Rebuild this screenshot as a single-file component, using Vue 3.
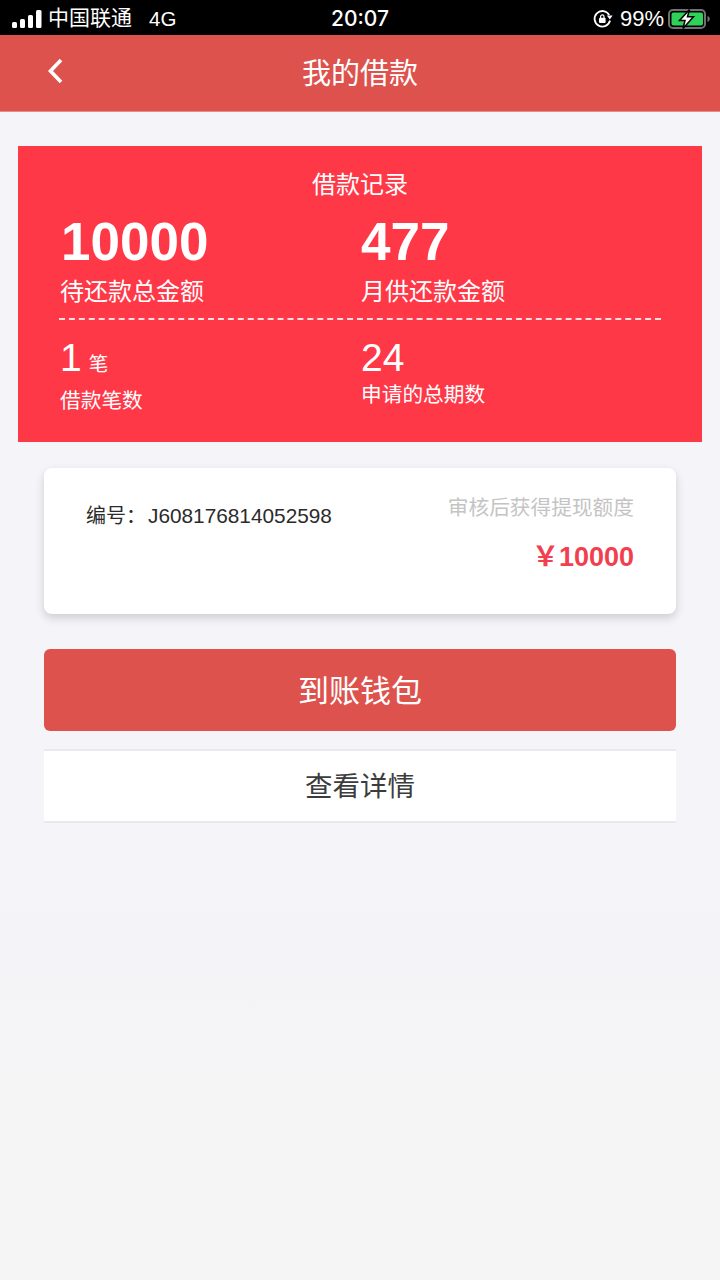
<template>
  <div class="page">
    <div class="status-bar">
      <div class="status-left">
        <svg class="signal" width="31" height="18" viewBox="0 0 31 18">
          <rect x="0" y="12" width="5" height="6" rx="1.5" fill="#fff" />
          <rect x="8" y="9" width="5" height="9" rx="1.5" fill="#fff" />
          <rect x="16" y="5" width="5" height="13" rx="1.5" fill="#fff" />
          <rect x="24" y="0" width="5.5" height="18" rx="1.5" fill="#fff" />
        </svg>
        <span class="carrier">中国联通</span>
        <span class="net">4G</span>
      </div>
      <div class="status-time">20:07</div>
      <div class="status-right">
        <svg width="20" height="20" viewBox="0 0 20 20" fill="none">
          <path d="M16.200 6A7.800 7.800 0 1 0 17 11.500" stroke="#fff" stroke-width="1.800" />
          <path d="M13.800 6.400h5.800L16.800 10.600z" fill="#fff" />
          <rect x="6" y="8.800" width="6.600" height="5.200" rx="1" fill="#fff" />
          <path d="M7.600 9V7.600a1.700 1.700 0 0 1 3.400 0V9" stroke="#fff" stroke-width="1.200" />
        </svg>
        <span class="percent">99%</span>
        <svg class="battery" width="43" height="20" viewBox="0 0 43 20" fill="none">
          <rect x="1" y="1" width="36" height="18" rx="4" stroke="#6f7173" stroke-width="2" />
          <rect x="3.500" y="3.500" width="31.500" height="13" rx="2" fill="#30d158" />
          <path d="M39.500 7v6c1.500-.4 2.300-1.600 2.300-3s-.8-2.600-2.300-3z" fill="#6f7173" />
          <path d="M21.500 0.500 11.500 11.500h5.500L15 19.500 25.500 7.800h-6z" fill="#fff" stroke="#000" stroke-width="1.500" />
        </svg>
      </div>
    </div>

    <header class="nav">
      <svg class="back" width="18" height="28" viewBox="0 0 18 28" fill="none">
        <path d="M15 3 4.500 14 15 25" stroke="#fff" stroke-width="3.600" />
      </svg>
      <h1 class="nav-title">我的借款</h1>
    </header>

    <section class="summary">
      <div class="summary-title">借款记录</div>
      <div class="summary-row">
        <div class="cell">
          <div class="big">10000</div>
          <div class="label">待还款总金额</div>
        </div>
        <div class="cell">
          <div class="big">477</div>
          <div class="label">月供还款金额</div>
        </div>
      </div>
      <div class="dash"></div>
      <div class="summary-row">
        <div class="cell">
          <div class="mid">1<small class="unit">笔</small></div>
          <div class="small-label">借款笔数</div>
        </div>
        <div class="cell">
          <div class="mid">24</div>
          <div class="small-label second">申请的总期数</div>
        </div>
      </div>
    </section>

    <main class="content">
      <div class="card">
        <div class="order">编号：<span class="order-no">J608176814052598</span></div>
        <div class="quota">
          <div class="quota-label">审核后获得提现额度</div>
          <div class="quota-value">￥10000</div>
        </div>
      </div>
      <button class="btn-primary" type="button">到账钱包</button>
      <button class="btn-plain" type="button">查看详情</button>
    </main>
  </div>
</template>

<script setup>
</script>

<style>
html,
body {
  margin: 0;
  background: #f5f5f6;
}
</style>

<style scoped>
.page {
  width: 720px;
  height: 1280px;
  overflow: hidden;
  background: linear-gradient(to bottom, #f4f4f9 0, #f4f4f9 880px, #f5f5f6 1100px);
  font-family: "Liberation Sans", "Noto Sans CJK SC", sans-serif;
}

.status-bar {
  height: 35px;
  background: #000;
  color: #fff;
  display: grid;
  grid-template-columns: 1fr auto 1fr;
  align-items: center;
  font-size: 21px;
}

.status-left {
  display: flex;
  align-items: center;
  padding-left: 12px;
}

.carrier {
  margin-left: 5px;
  line-height: 35px;
  padding-bottom: 2px;
}

.net {
  margin-left: 17px;
  font-size: 20.5px;
}

.status-time {
  font-family: Inter, "Liberation Sans", sans-serif;
  font-weight: 500;
  font-size: 21px;
}

.status-right {
  display: flex;
  align-items: center;
  justify-content: flex-end;
  padding-right: 9px;
}

.percent {
  margin: 0 4px 0 7px;
  font-size: 22px;
}

.nav {
  height: 72px;
  padding-bottom: 4px;
  background: #dd524d;
  border-bottom: 1px solid #e98a86;
  display: flex;
  align-items: center;
  justify-content: center;
  position: relative;
}

.back {
  position: absolute;
  left: 46px;
  top: 22px;
}

.nav-title {
  margin: 0;
  font-size: 29px;
  font-weight: 400;
  color: #fff;
}

.summary {
  margin: 34px 18px 0;
  height: 296px;
  box-sizing: border-box;
  padding: 24px 41px 0;
  background: #ff3848;
  color: #fff;
}

.summary-title {
  text-align: center;
  font-size: 24px;
  line-height: 30px;
}

.summary-row {
  display: grid;
  grid-template-columns: 301px 1fr;
}

.cell {
  padding-left: 1px;
}

.cell:first-child .big {
  margin-left: 1px;
}

.big {
  font-size: 53px;
  font-weight: 700;
  line-height: 58px;
  margin-top: 13px;
}

.label {
  font-size: 24px;
  line-height: 32px;
  margin-top: 5px;
}

.dash {
  height: 0;
  margin-top: 10px;
  border-top: 2px dashed #fbdde0;
}

.mid {
  font-size: 39px;
  line-height: 46px;
  margin-top: 15px;
}

.unit {
  font-size: 19.5px;
  margin-left: 7px;
}

.small-label {
  font-size: 20.7px;
  line-height: 28px;
}

.content {
  padding: 0 44px;
}

.card {
  margin-top: 26px;
  height: 146px;
  box-sizing: border-box;
  padding: 25px 42px 0;
  background: #fff;
  border-radius: 8px;
  box-shadow: 0 4px 10px rgba(0, 0, 0, 0.16);
  display: flex;
  justify-content: space-between;
}

.order {
  font-size: 20px;
  line-height: 46px;
  color: #2b2b2b;
}

.order-no {
  font-size: 20.8px;
  margin-left: 2px;
}

.quota {
  text-align: right;
}

.quota-label {
  font-size: 20.7px;
  line-height: 30px;
  color: #c4c4c4;
}

.quota-value {
  font-size: 27px;
  font-weight: 700;
  line-height: 36px;
  margin-top: 16px;
  color: #f23f4f;
}

.btn-primary,
.btn-plain {
  display: block;
  width: 100%;
  font-family: inherit;
  font-weight: 400;
}

.btn-primary {
  margin-top: 35px;
  height: 82px;
  padding: 0 0 4px;
  border: none;
  border-radius: 6px;
  background: #dd524d;
  color: #fff;
  font-size: 31px;
}

.btn-plain {
  margin-top: 18px;
  height: 74px;
  padding: 0 0 4px;
  border: none;
  border-top: 2px solid #e9e9ed;
  border-bottom: 2px solid #e9e9ed;
  background: #fff;
  color: #3c3c3c;
  font-size: 27.5px;
}
</style>
